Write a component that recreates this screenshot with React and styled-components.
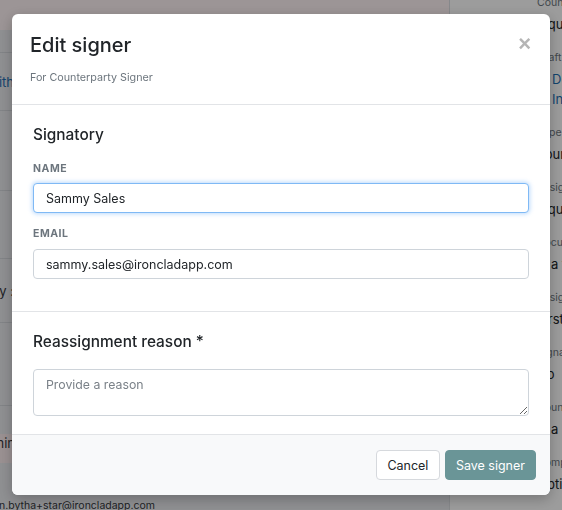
import React from "react"
import styled, { createGlobalStyle } from "styled-components"

const GlobalStyle = createGlobalStyle`
  html, body {
    margin: 0;
    padding: 0;
  }
  body {
    font-family: Inter, "Noto Sans", "Liberation Sans", sans-serif;
    font-size: 12.5px;
    color: #212529;
    overflow: hidden;
  }
  * {
    box-sizing: border-box;
  }
`

/* Background page (sits under the dimmed overlay) */

const Page = styled.div`
  display: grid;
  grid-template-columns: 449px 1fr;
  height: 510px;
  overflow: hidden;
`

const Main = styled.div`
  display: flex;
  flex-direction: column;
  background: #eaebef;
  overflow: hidden;
`

const Banner = styled.div`
  height: 30px;
  flex: none;
  background: #fff4f5;
`

const Row = styled.div`
  height: ${({ h }) => h}px;
  flex: none;
  display: flex;
  align-items: ${({ align }) => align || "center"};
  border-bottom: ${({ line }) => (line ? "1px solid #d4d7dc" : "none")};
  background: ${({ tint }) => (tint ? "#fcedef" : "transparent")};
`

const Lead = styled.div`
  width: ${({ w }) => w}px;
  flex: none;
  display: flex;
  justify-content: flex-end;
  overflow: hidden;
  white-space: nowrap;
  font-size: 13px;
  line-height: 18px;
  color: ${({ link }) => (link ? "#1f6fb2" : "#34373c")};
`

const OwnerEmail = styled.div`
  margin-left: -1px;
  white-space: nowrap;
  font-size: 10.5px;
  line-height: 16px;
  color: #34373c;
`

const Sidebar = styled.aside`
  background: #ffffff;
  border-left: 1px solid #dcdfe3;
  padding-left: 87px;
  overflow: hidden;
`

const FieldList = styled.div`
  margin-top: -5px;
`

const Field = styled.div`
  padding-bottom: 16px;
`

const FieldLabel = styled.div`
  width: max-content;
  margin-bottom: 3px;
  font-size: 10.5px;
  line-height: 16px;
  color: #6c757d;
  white-space: nowrap;
`

const FieldValue = styled.div`
  width: max-content;
  display: flex;
  align-items: center;
  gap: 3px;
  margin-left: ${({ nudge }) => nudge || 0}px;
  font-size: 13px;
  line-height: 20px;
  color: ${({ link }) => (link ? "#1f6fb2" : "#212529")};
  white-space: nowrap;

  svg {
    flex: none;
  }
`

/* Modal */

const Overlay = styled.div`
  position: fixed;
  inset: 0;
  display: flex;
  align-items: flex-start;
  padding: 14px 12px;
  background: rgba(0, 0, 0, 0.39);
`

const Modal = styled.div`
  width: 538px;
  display: flex;
  flex-direction: column;
  background: #ffffff;
  border-radius: 6px;
  box-shadow: 0 4px 14px rgba(0, 0, 0, 0.25);
  overflow: hidden;
`

const Header = styled.header`
  display: flex;
  justify-content: space-between;
  align-items: flex-start;
  padding: 18px 19px 17px 18px;
  border-bottom: 1px solid #e2e4e7;
`

const Title = styled.h4`
  margin: 0;
  font-size: 20px;
  line-height: 26px;
  font-weight: 500;
  color: #212529;
`

const Subtitle = styled.div`
  margin-top: 11px;
  font-size: 10.75px;
  line-height: 18px;
  color: #6c757d;
`

const Close = styled.button`
  margin-top: 1px;
  padding: 0;
  border: 0;
  background: none;
  font-family: "Liberation Sans", sans-serif;
  font-size: 22px;
  line-height: 22px;
  font-weight: 700;
  color: #b5b5b5;
  cursor: pointer;
`

const Section = styled.section`
  padding: 18px 21px ${({ pb }) => pb}px;
  border-bottom: 1px solid #e2e4e7;
`

const SectionTitle = styled.h5`
  margin: 0;
  font-size: 15.4px;
  line-height: 24px;
  font-weight: 500;
  color: #212529;
`

const FormLabel = styled.label`
  display: block;
  margin: ${({ mt }) => mt}px 0 ${({ mb }) => mb}px;
  font-size: 10.5px;
  line-height: 16px;
  font-weight: 700;
  letter-spacing: 0.05em;
  text-transform: uppercase;
  color: #6c757d;
`

const TextInput = styled.input`
  display: block;
  width: 100%;
  height: 30px;
  padding: 0 12px;
  border: 1px solid ${({ focused }) => (focused ? "#7fb9f5" : "#ced4da")};
  border-radius: 4px;
  font-family: inherit;
  font-size: 12.5px;
  color: #212529;
  background: #ffffff;
  outline: none;
  box-shadow: ${({ focused }) =>
    focused ? "0 0 4px 1px rgba(64, 150, 245, 0.35)" : "none"};
`

const Reason = styled.textarea`
  display: block;
  width: 100%;
  height: 47px;
  margin-top: 15px;
  padding: 6px 12px;
  border: 1px solid #ced4da;
  border-radius: 4px;
  font-family: inherit;
  font-size: 12.3px;
  line-height: 18px;
  color: #212529;
  resize: vertical;
  outline: none;

  &::placeholder {
    color: #7a8188;
  }
`

const Footer = styled.footer`
  display: flex;
  justify-content: flex-end;
  gap: 5px;
  padding: 15px 14px 15px;
  background: #f8f9fa;
`

const Button = styled.button`
  height: 30px;
  padding: 0 ${({ primary }) => (primary ? 10 : 10.5)}px;
  border-radius: 4px;
  border: 1px solid ${({ primary }) => (primary ? "#6a9597" : "#d6d9dd")};
  background: ${({ primary }) => (primary ? "#6a9597" : "#ffffff")};
  color: ${({ primary }) => (primary ? "#ffffff" : "#212529")};
  font-family: inherit;
  font-size: 12.5px;
  font-weight: 400;
  cursor: pointer;
`

const DocIcon = () => (
  <svg width="12" height="14" viewBox="0 0 12 14" fill="none">
    <path d="M2 1h5l3 3v9H2z" stroke="#1f6fb2" strokeWidth="1.2" />
  </svg>
)

const fields = [
  { label: "Counterparty", values: ["Required"], nudge: -5 },
  { label: "Draft", values: ["Document.docx", "Internal.docx"], link: true },
  { label: "Type", values: ["Your paper"] },
  { label: "Assignee", values: ["Required"], nudge: -5 },
  { label: "Document", values: ["Is a template"] },
  { label: "Assigned", values: ["First"] },
  { label: "Signature", values: ["No"] },
  { label: "Count", values: ["Is a number"] },
  { label: "Company", values: ["Optional"] },
]

const App = () => {
  return (
    <>
      <GlobalStyle />
      <Page>
        <Main>
          <Banner />
          <Row h={23} line />
          <Row h={58} line>
            <Lead w={14} link>
              Sign with
            </Lead>
          </Row>
          <Row h={80} line />
          <Row h={68} line />
          <Row h={64} line>
            <Lead w={14}>Party :</Lead>
          </Row>
          <Row h={83} line />
          <Row h={28} />
          <Row h={29} tint align="flex-start">
            <Lead w={15}>Admin</Lead>
          </Row>
          <Row h={51} align="flex-end">
            <OwnerEmail>n.bytha+star@ironcladapp.com</OwnerEmail>
          </Row>
        </Main>
        <Sidebar>
          <FieldList>
            {fields.map(field => (
              <Field key={field.label}>
                <FieldLabel>{field.label}</FieldLabel>
                {field.values.map(value => (
                  <FieldValue key={value} link={field.link} nudge={field.nudge}>
                    {field.link && <DocIcon />}
                    {value}
                  </FieldValue>
                ))}
              </Field>
            ))}
          </FieldList>
        </Sidebar>
      </Page>

      <Overlay>
        <Modal>
          <Header>
            <div>
              <Title>Edit signer</Title>
              <Subtitle>For Counterparty Signer</Subtitle>
            </div>
            <Close aria-label="Close">×</Close>
          </Header>

          <Section pb={32}>
            <SectionTitle>Signatory</SectionTitle>
            <FormLabel mt={14} mb={6}>
              Name
            </FormLabel>
            <TextInput focused defaultValue="Sammy Sales" />
            <FormLabel mt={13} mb={7}>
              Email
            </FormLabel>
            <TextInput defaultValue="sammy.sales@ironcladapp.com" />
          </Section>

          <Section pb={18}>
            <SectionTitle>Reassignment reason *</SectionTitle>
            <Reason placeholder="Provide a reason" />
          </Section>

          <Footer>
            <Button>Cancel</Button>
            <Button primary>Save signer</Button>
          </Footer>
        </Modal>
      </Overlay>
    </>
  )
}

export default App
